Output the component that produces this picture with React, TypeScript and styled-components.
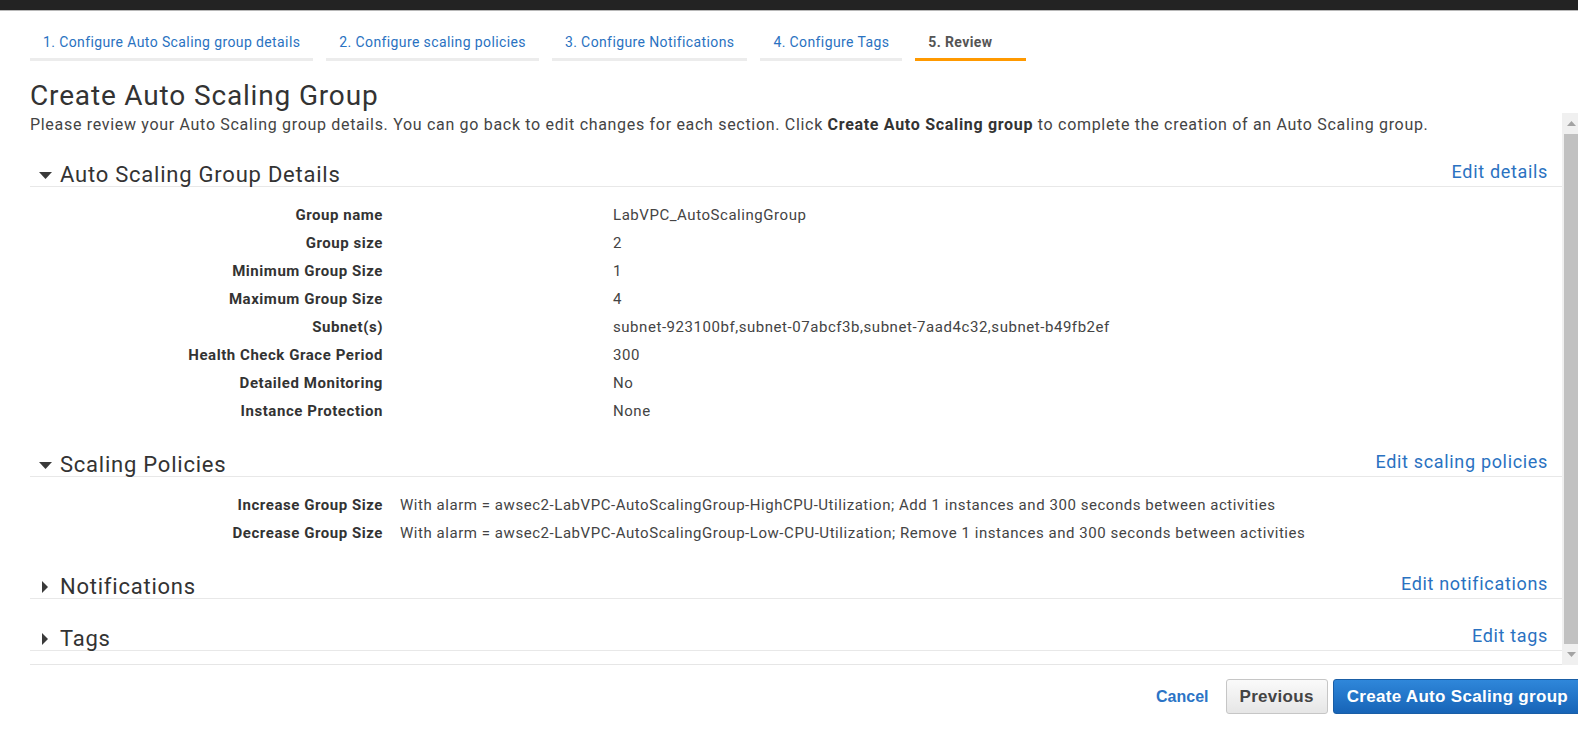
import React from "react";
import styled, { createGlobalStyle } from "styled-components";

const Global = createGlobalStyle`
  html, body { margin: 0; padding: 0; background: #fff; overflow: hidden; }
  body { font-family: Roboto, "Noto Sans", sans-serif; color: #444; }
  * { box-sizing: border-box; }
`;

const TopBar = styled.div`
  height: 11px;
  background: #232323;
  border-bottom: 1px solid #b8b8b8;
`;

const Page = styled.div`
  padding-left: 30px;
`;

const Tabs = styled.nav`
  display: flex;
  gap: 13px;
  padding-top: 11px;
`;

const Tab = styled.div<{ $active?: boolean }>`
  min-width: 111px;
  padding: 10px 13px 6px;
  font-size: 14px;
  letter-spacing: 0.39px;
  line-height: 20px;
  white-space: nowrap;
  color: ${(p) => (p.$active ? "#555" : "#2a72c1")};
  font-weight: ${(p) => (p.$active ? 700 : 400)};
  border-bottom: 3px solid ${(p) => (p.$active ? "#ff9900" : "#ececec")};
`;

const Title = styled.h1`
  margin: 18px 0 0;
  font-size: 28px;
  letter-spacing: 0.84px;
  line-height: 34px;
  font-weight: 400;
  color: #333;
`;

const Panel = styled.div`
  display: flex;
  align-items: stretch;
`;

const Content = styled.div`
  flex: 1;
  min-width: 0;
  padding-bottom: 13px;
  border-bottom: 1px solid #e6e6e6;
`;

const Description = styled.p`
  margin: 0;
  padding-top: 2px;
  font-size: 16px;
  letter-spacing: 0.69px;
  line-height: 20px;
  color: #444;
  white-space: nowrap;
  b { font-weight: 700; color: #333; }
`;

const Section = styled.section`
  padding-top: 29px;
`;

const SectionHeader = styled.div`
  display: flex;
  align-items: flex-end;
  height: 23px;
  border-bottom: 1px solid #e8e8e8;
`;

const Toggle = styled.span`
  width: 30px;
  height: 22px;
  display: flex;
  align-items: center;
  justify-content: center;
  flex: none;
`;

const SectionTitle = styled.h2`
  margin: 0;
  font-size: 22px;
  letter-spacing: 0.77px;
  line-height: 22px;
  font-weight: 400;
  color: #333;
  white-space: nowrap;
`;

const EditLink = styled.a`
  margin-left: auto;
  margin-right: 14px;
  padding-bottom: 3px;
  font-size: 18px;
  letter-spacing: 0.67px;
  line-height: 22px;
  color: #2a72c1;
  text-decoration: none;
  cursor: pointer;
`;

const Rows = styled.div<{ $gap: number }>`
  display: grid;
  grid-template-columns: 353px 1fr;
  column-gap: ${(p) => p.$gap}px;
  padding-top: 14px;
`;

const Label = styled.div`
  text-align: right;
  font-size: 15px;
  letter-spacing: 0.55px;
  line-height: 28px;
  font-weight: 700;
  color: #333;
  white-space: nowrap;
`;

const Value = styled.div`
  font-size: 15px;
  letter-spacing: 0.55px;
  line-height: 28px;
  color: #444;
  white-space: nowrap;
`;

const Scrollbar = styled.div`
  width: 16px;
  flex: none;
  background: #f0f0f0;
  display: flex;
  flex-direction: column;
`;

const ScrollArrow = styled.div`
  height: 21px;
  display: flex;
  align-items: center;
  justify-content: center;
  padding-left: 2px;
`;

const Thumb = styled.div`
  flex: 1;
  margin-left: 2px;
  background: #c1c1c1;
`;

const Footer = styled.div`
  display: flex;
  justify-content: flex-end;
  align-items: center;
  padding-top: 14px;
  margin-right: -4px;
`;

const CancelLink = styled.a`
  font-family: "Liberation Sans", Arial, sans-serif;
  font-weight: 700;
  font-size: 16px;
  color: #2b74c6;
  margin-right: 17px;
  cursor: pointer;
`;

const Button = styled.button<{ $primary?: boolean }>`
  height: 35px;
  padding: 0 13px;
  margin-left: ${(p) => (p.$primary ? "5px" : "0")};
  font-family: "Liberation Sans", Arial, sans-serif;
  font-weight: 700;
  font-size: 17px;
  letter-spacing: 0.3px;
  white-space: nowrap;
  border-radius: 3px;
  cursor: pointer;
  color: ${(p) => (p.$primary ? "#fff" : "#444")};
  border: 1px solid ${(p) => (p.$primary ? "#1a5ea6" : "#c6c6c6")};
  background: ${(p) =>
    p.$primary
      ? "linear-gradient(#2f87da, #1764b7)"
      : "linear-gradient(#fafafa, #e6e6e6)"};
`;

const CaretDown = () => (
  <svg width="13" height="7" viewBox="0 0 13 7">
    <path d="M0 0 L13 0 L6.5 7 Z" fill="#3a3a3a" />
  </svg>
);

const CaretRight = () => (
  <svg width="6" height="12" viewBox="0 0 6 12">
    <path d="M0 0 L6 6 L0 12 Z" fill="#3a3a3a" />
  </svg>
);

const ArrowUp = () => (
  <svg width="9" height="5" viewBox="0 0 9 5">
    <path d="M0 5 L4.5 0 L9 5 Z" fill="#a3a3a3" />
  </svg>
);

const ArrowDown = () => (
  <svg width="9" height="5" viewBox="0 0 9 5">
    <path d="M0 0 L9 0 L4.5 5 Z" fill="#a3a3a3" />
  </svg>
);

const details: [string, string][] = [
  ["Group name", "LabVPC_AutoScalingGroup"],
  ["Group size", "2"],
  ["Minimum Group Size", "1"],
  ["Maximum Group Size", "4"],
  ["Subnet(s)", "subnet-923100bf,subnet-07abcf3b,subnet-7aad4c32,subnet-b49fb2ef"],
  ["Health Check Grace Period", "300"],
  ["Detailed Monitoring", "No"],
  ["Instance Protection", "None"],
];

const policies: [string, string][] = [
  [
    "Increase Group Size",
    "With alarm = awsec2-LabVPC-AutoScalingGroup-HighCPU-Utilization; Add 1 instances and 300 seconds between activities",
  ],
  [
    "Decrease Group Size",
    "With alarm = awsec2-LabVPC-AutoScalingGroup-Low-CPU-Utilization; Remove 1 instances and 300 seconds between activities",
  ],
];

const tabs = [
  "1. Configure Auto Scaling group details",
  "2. Configure scaling policies",
  "3. Configure Notifications",
  "4. Configure Tags",
  "5. Review",
];

type SectionProps = {
  title: string;
  edit: string;
  open?: boolean;
  rows?: [string, string][];
  gap?: number;
};

const ReviewSection = ({ title, edit, open, rows, gap = 17 }: SectionProps) => (
  <Section>
    <SectionHeader>
      <Toggle>{open ? <CaretDown /> : <CaretRight />}</Toggle>
      <SectionTitle>{title}</SectionTitle>
      <EditLink>{edit}</EditLink>
    </SectionHeader>
    {open && rows && (
      <Rows $gap={gap}>
        {rows.map(([k, v]) => (
          <React.Fragment key={k}>
            <Label>{k}</Label>
            <Value>{v}</Value>
          </React.Fragment>
        ))}
      </Rows>
    )}
  </Section>
);

export default function App() {
  return (
    <>
      <Global />
      <TopBar />
      <Page>
        <Tabs>
          {tabs.map((t, i) => (
            <Tab key={t} $active={i === tabs.length - 1}>
              {t}
            </Tab>
          ))}
        </Tabs>
        <Title>Create Auto Scaling Group</Title>
        <Panel>
          <Content>
            <Description>
              Please review your Auto Scaling group details. You can go back to edit changes for
              each section. Click <b>Create Auto Scaling group</b> to complete the creation of an
              Auto Scaling group.
            </Description>
            <ReviewSection
              title="Auto Scaling Group Details"
              edit="Edit details"
              open
              rows={details}
              gap={230}
            />
            <ReviewSection
              title="Scaling Policies"
              edit="Edit scaling policies"
              open
              rows={policies}
              gap={17}
            />
            <ReviewSection title="Notifications" edit="Edit notifications" />
            <ReviewSection title="Tags" edit="Edit tags" />
          </Content>
          <Scrollbar>
            <ScrollArrow>
              <ArrowUp />
            </ScrollArrow>
            <Thumb />
            <ScrollArrow>
              <ArrowDown />
            </ScrollArrow>
          </Scrollbar>
        </Panel>
        <Footer>
          <CancelLink>Cancel</CancelLink>
          <Button>Previous</Button>
          <Button $primary>Create Auto Scaling group</Button>
        </Footer>
      </Page>
    </>
  );
}
